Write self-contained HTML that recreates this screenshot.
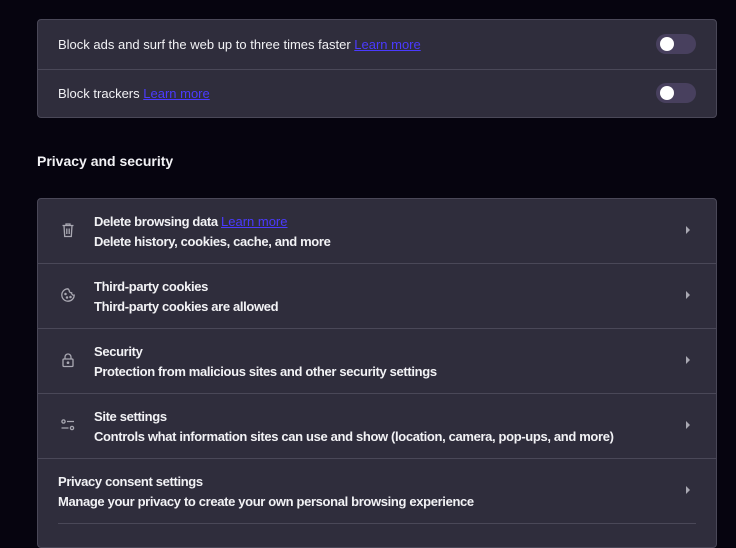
<!DOCTYPE html>
<html><head><meta charset="utf-8"><style>
*{margin:0;padding:0;box-sizing:border-box}
body{width:736px;height:536px;background:#06040f;font-family:"Liberation Sans",sans-serif;color:#f2f2f5;overflow:hidden;position:relative}
.card{position:absolute;left:37px;width:680px;background:#2f2d3c;border:1px solid #4a4858;border-radius:4px}
.row{position:relative;border-top:1px solid #4a4858}
.row:first-child{border-top:none}
.r1{height:49px;font-size:13px;line-height:49px;padding-left:20px}
.r1+.r1{height:49px;line-height:47px}
a{color:#4b3aff;text-decoration:underline}
.tog{position:absolute;left:618px;top:14px;width:40px;height:20px;border-radius:10px;background:#48405e}
.tog:after{content:"";position:absolute;left:4px;top:3px;width:14px;height:14px;border-radius:50%;background:#fff}
h2{position:absolute;left:37px;top:153px;font-size:14px;font-weight:bold;color:#f2f2f5}
.r2{height:65px;font-size:13px;font-weight:bold;letter-spacing:-0.35px}
.r2:first-child{height:64px}
.r2 .t{position:absolute;left:56px;top:13px;line-height:20px}
.r2 .t.noi{left:20px}
.r2 a{font-weight:normal;letter-spacing:0}
.ic{position:absolute;left:22px;top:23px;width:16px;height:16px}
.chev{position:absolute;right:26px;top:27px;width:0;height:0;border-left:4px solid #a9a8b2;border-top:4px solid transparent;border-bottom:4px solid transparent}
</style></head><body>
<div class="card" style="top:19px;height:99px">
 <div class="row r1">Block ads and surf the web up to three times faster <a>Learn more</a><div class="tog"></div></div>
 <div class="row r1">Block trackers <a>Learn more</a><div class="tog" style="top:13px"></div></div>
</div>
<h2>Privacy and security</h2>
<div class="card" style="top:198px;height:350px">
 <div class="row r2"><svg class="ic" viewBox="0 0 16 16" fill="none" stroke="#a9a8b2" stroke-width="1.3"><path d="M2.5 3.5h11M6 3.5V2h4v1.5M4 3.5l.7 11h6.6l.7-11M6.8 6.5v5.5M9.2 6.5v5.5"/></svg><div class="t">Delete browsing data <a>Learn more</a><br>Delete history, cookies, cache, and more</div><div class="chev"></div></div>
 <div class="row r2"><svg class="ic" viewBox="0 0 16 16" fill="none" stroke="#a9a8b2" stroke-width="1.3"><path d="M8 1.8a6.2 6.2 0 1 0 6.2 6.4 2.2 2.2 0 0 1-2.6-2.4 2.2 2.2 0 0 1-2.4-2.6A2 2 0 0 1 8 1.8z"/><circle cx="5.5" cy="7" r=".6" fill="#a9a8b2"/><circle cx="7" cy="10.5" r=".6" fill="#a9a8b2"/><circle cx="10.5" cy="10" r=".6" fill="#a9a8b2"/></svg><div class="t">Third-party cookies<br>Third-party cookies are allowed</div><div class="chev"></div></div>
 <div class="row r2"><svg class="ic" viewBox="0 0 16 16" fill="none" stroke="#a9a8b2" stroke-width="1.3"><rect x="3" y="7" width="10" height="7.5" rx="1"/><path d="M5 7V5a3 3 0 0 1 6 0v2"/><circle cx="8" cy="10.7" r=".7" fill="#a9a8b2"/></svg><div class="t">Security<br>Protection from malicious sites and other security settings</div><div class="chev"></div></div>
 <div class="row r2"><svg class="ic" viewBox="0 0 16 16" fill="none" stroke="#a9a8b2" stroke-width="1.3"><circle cx="3.5" cy="4.5" r="1.6"/><path d="M7 4.5h7M1.5 11h7"/><circle cx="12" cy="11" r="1.6"/></svg><div class="t">Site settings<br>Controls what information sites can use and show (location, camera, pop-ups, and more)</div><div class="chev"></div></div>
 <div class="row r2"><div class="t noi">Privacy consent settings<br>Manage your privacy to create your own personal browsing experience</div><div class="chev"></div><div style="position:absolute;left:20px;right:20px;top:64px;height:1px;background:#4a4858"></div></div>
</div>
</body></html>
